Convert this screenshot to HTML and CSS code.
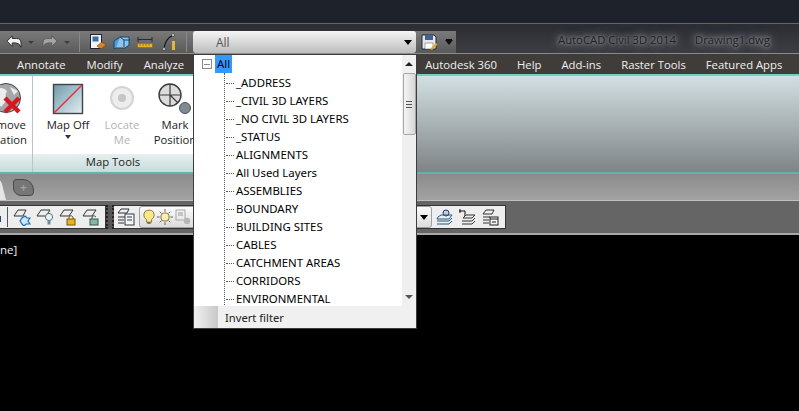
FILE: index.html
```html
<!DOCTYPE html>
<html lang="en">
<head>
    <meta charset="UTF-8">
    <meta name="viewport" content="width=device-width, initial-scale=1.0">
    <title>AutoCAD Civil 3D 2014</title>
    <link rel="stylesheet" href="styles.css">
</head>
<body>
    <div id="app">
        <div class="top-strip"></div>

        <div class="header">
            <div class="qat">
                <svg class="qat-icon undo" width="16" height="14" viewBox="0 0 18 16"><path d="M1 7 L7 1 V4 H12 Q17 4 17 9 V14 Q15 9 11 9 H7 V13 Z" fill="#f2f2f2" stroke="#222"/></svg>
                <span class="mini-arrow"></span>
                <svg class="qat-icon redo" width="16" height="14" viewBox="0 0 18 16"><path d="M17 7 L11 1 V4 H6 Q1 4 1 9 V14 Q3 9 7 9 H11 V13 Z" fill="#a4a4a4" stroke="#5a5a5a"/></svg>
                <span class="mini-arrow"></span>
                <span class="qat-sep"></span>
                <svg class="qat-icon doc" width="18" height="18" viewBox="0 0 18 18"><rect x="1.5" y="1.5" width="11" height="14" fill="#f4f4f4" stroke="#223"/><rect x="3.5" y="3.5" width="6" height="5" fill="#3a6ea5"/><path d="M8 13 L13 9 L17 12 L12 16 Z" fill="#d9822b" stroke="#6b3c0a" stroke-width=".6"/></svg>
                <svg class="qat-icon cube" width="18" height="16" viewBox="0 0 18 16"><path d="M1 7 L7 3 V12 L1 15 Z" fill="#4f9bd8" stroke="#17466f"/><path d="M7 3 H16 V11 L12 14 H3" fill="#8fc5ec" stroke="#17466f"/><path d="M7 3 L11 6 H17 M11 6 V13" fill="none" stroke="#17466f"/></svg>
                <svg class="qat-icon ruler" width="16" height="12" viewBox="0 0 16 12"><path d="M1 3.5 H15 M1 1 V6 M15 1 V6" fill="none" stroke="#2a2a2a"/><rect x="0.5" y="7.5" width="15" height="4" fill="#e5b33a" stroke="#8a6510" stroke-width=".6"/><path d="M3 8 V10 M6 8 V10 M9 8 V10 M12 8 V10" stroke="#7a5a10" stroke-width=".7"/></svg>
                <svg class="qat-icon arc" width="16" height="18" viewBox="0 0 16 18"><path d="M2 16 Q3 6 11 2" fill="none" stroke="#111" stroke-width="1.2"/><circle cx="2" cy="16" r="1.4" fill="#fff" stroke="#111" stroke-width=".6"/><circle cx="11" cy="2" r="1.4" fill="#fff" stroke="#111" stroke-width=".6"/><rect x="10" y="8" width="3" height="9" fill="#e5b33a"/></svg>
                <span class="qat-sep right"></span>
                <div class="combo">
                    <span>All</span>
                    <span class="arrow"></span>
                </div>
                <svg class="qat-icon save" width="17" height="17" viewBox="0 0 17 17"><path d="M1 1 H13 L15 3 V15 H1 Z" fill="#e8e8e8" stroke="#1c2a44"/><rect x="4" y="1" width="8" height="5" fill="#44628e"/><rect x="4" y="9" width="8" height="6" fill="#fff" stroke="#555" stroke-width=".5"/><path d="M9 15 L15 9 L16.5 10.5 L11 16 Z" fill="#e7a52f"/></svg>
                <span class="more"></span>
            </div>
            <span class="app-title">AutoCAD Civil 3D 2014</span>
            <span class="app-title file">Drawing1.dwg</span>
        </div>

        <div class="tabs">
            <span class="tab first">Annotate</span>
            <span class="tab second">Modify</span>
            <span class="tab">Analyze</span>
            <span class="tab hub">Autodesk 360</span>
            <span class="tab">Help</span>
            <span class="tab">Add-ins</span>
            <span class="tab">Raster Tools</span>
            <span class="tab">Featured Apps</span>
        </div>

        <div class="ribbon">
            <div class="panel remove">
                <div class="panel-body">
                    <div class="tool">
                        <svg width="36" height="32" viewBox="0 0 36 32"><circle cx="13" cy="15" r="14.5" fill="#a4a8aa" stroke="#444"/><path d="M4 6 Q10 3 14 8 Q11 13 14 17 L8 24 Q2 16 4 6 Z M17 4 L25 8 L21 12 Z" fill="#ececec"/><path d="M12 15 L26 29 M26 15 L12 29" stroke="#d8161b" stroke-width="4.5"/></svg>
                        <span>Remove<br>Location</span>
                    </div>
                </div>
                <div class="panel-label"></div>
            </div>
            <div class="panel map-tools">
                <div class="panel-body">
                    <div class="tool map-off">
                        <svg width="32" height="32" viewBox="0 0 32 32"><defs><linearGradient id="mapfill" x1="0" y1="0" x2="1" y2="1"><stop offset="0" stop-color="#6f99ab"/><stop offset="1" stop-color="#e4eef2"/></linearGradient></defs><rect x="1.5" y="1.5" width="29" height="29" fill="url(#mapfill)" stroke="#3e4448" stroke-width="1.4"/><path d="M2 30 L30 2" stroke="#d9343c" stroke-width="1.4"/></svg>
                        <span>Map Off</span>
                        <i class="drop"></i>
                    </div>
                    <div class="tool locate">
                        <svg width="32" height="32" viewBox="0 0 32 32"><circle cx="16" cy="15" r="11" fill="#ededed" stroke="#d4d4d4" stroke-width="2"/><circle cx="16" cy="15" r="4" fill="#c6c6c6"/></svg>
                        <span>Locate<br>Me</span>
                    </div>
                    <div class="tool mark">
                        <svg width="36" height="32" viewBox="0 0 36 32"><circle cx="13" cy="12" r="11" fill="#dcdcdc" stroke="#3a3a3a" stroke-width="1.4"/><path d="M13 1 V23 M2 12 H24 M13 12 L21 20" stroke="#3a3a3a" stroke-width="1.2"/><circle cx="28" cy="25" r="5.5" fill="#7f8b90" stroke="#49555a"/></svg>
                        <span>Mark<br>Position</span>
                    </div>
                </div>
                <div class="panel-label">Map Tools</div>
            </div>
            <div class="panel-rest"></div>
        </div>

        <div class="doc-tabs">
            <span class="doc-tab"></span>
            <span class="new-tab"><b>+</b></span>
        </div>

        <div class="toolbar">
            <div class="strip left-strip">
                <span class="tb-edge"></span>
                <span class="tb-sep"></span>
                <svg class="layer" width="18" height="18" viewBox="0 0 18 18"><path d="M1 8 L5 2 H13 L10 8 Z" fill="none" stroke="#333"/><path d="M12 8 L14 10 L17 10 L15 13 L17 16 L13 16 L11 18 L9 16 L7 13 L9 10 Z" fill="#cfe6f7" stroke="#1b6fb5" stroke-width="1.2"/></svg>
                <svg class="layer" width="18" height="18" viewBox="0 0 18 18"><path d="M1 8 L5 2 H14 L10 8 Z" fill="none" stroke="#333"/><circle cx="13" cy="9" r="3.6" fill="#e9f1f6" stroke="#577"/><rect x="11.5" y="12.5" width="3" height="4" fill="#6f8c9a"/></svg>
                <svg class="layer" width="18" height="18" viewBox="0 0 18 18"><path d="M1 8 L5 2 H14 L10 8 Z" fill="none" stroke="#333"/><rect x="8" y="11" width="8" height="6" fill="#e6b422" stroke="#7a5a0a"/><path d="M10 11 V9 Q12 6 14 9 V11" fill="none" stroke="#7a5a0a"/></svg>
                <svg class="layer" width="18" height="18" viewBox="0 0 18 18"><path d="M1 8 L5 2 H14 L10 8 Z" fill="none" stroke="#333"/><rect x="8" y="11" width="8" height="6" fill="#8cb4a8" stroke="#2f5a50"/><path d="M10 11 V9 Q12 6 14 9" fill="none" stroke="#2f5a50"/></svg>
            </div>
            <span class="gripper"></span>
            <div class="strip main-strip">
                <svg class="stack first" width="18" height="18" viewBox="0 0 18 18"><path d="M1 5 L4 1 H12 L10 5 Z M1 9 H8 M1 12 H7 M1 15 H7" fill="none" stroke="#333"/><rect x="8" y="6" width="9" height="11" fill="#f4f6f8" stroke="#2d3b4a"/><path d="M10 9 H15 M10 12 H15" stroke="#2d3b4a"/></svg>
                <div class="layer-combo">
                    <svg width="12" height="16" viewBox="0 0 14 18"><path d="M7 1 Q13 1 13 7 Q13 10 10 12 V15 H4 V12 Q1 10 1 7 Q1 1 7 1 Z" fill="#fbe88a" stroke="#7b6a2a"/><rect x="5" y="15" width="4" height="2" fill="#666"/></svg>
                    <svg width="16" height="16" viewBox="0 0 18 18"><circle cx="9" cy="9" r="4.6" fill="#fbeeb5" stroke="#7b6a2a"/><path d="M9 0 V3 M9 15 V18 M0 9 H3 M15 9 H18 M3 3 L5 5 M13 13 L15 15 M15 3 L13 5 M3 15 L5 13" stroke="#555"/></svg>
                    <svg width="16" height="16" viewBox="0 0 16 16"><rect x="1" y="1" width="9" height="10" fill="none" stroke="#a8a8a8"/><rect x="3" y="3" width="5" height="4" fill="#c4c4c4"/><circle cx="12" cy="12" r="3.2" fill="#b6b6b6"/></svg>
                    <span class="arrow"></span>
                </div>
                <svg class="stack" width="17" height="17" viewBox="0 0 17 17"><circle cx="10" cy="4" r="3" fill="#b8d4e4" stroke="#336"/><path d="M2 8 L5 6 H16 L13 10 H1 Z M1 12 H13 L16 9 M1 15 H13 L16 12" fill="none" stroke="#1f5d85"/></svg>
                <svg class="stack" width="17" height="17" viewBox="0 0 17 17"><path d="M0 2 H6 M1 0 V4 M6 2 V7" stroke="#111"/><path d="M4 9 L7 6 H16 L13 9 Z M3 12 H13 L16 9 M3 15 H13 L16 12" fill="none" stroke="#333"/></svg>
                <svg class="stack" width="17" height="17" viewBox="0 0 17 17"><path d="M1 5 L4 1 H12 L10 5 Z M1 8 H8 M1 11 H7 M1 14 H7" fill="none" stroke="#333"/><rect x="8" y="8" width="8" height="8" fill="#f4f4f4" stroke="#222"/><path d="M8 10 H16 M10 13 H14" stroke="#222"/></svg>
            </div>
        </div>

        <div class="canvas">ne]</div>

        <div class="dropdown">
            <div class="list">
                <div class="tree">
                    <div class="root">
                        <span class="collapse"></span>
                        <span class="selected">All</span>
                    </div>
                    <div class="children">
                        <div>_ADDRESS</div>
                        <div>_CIVIL 3D LAYERS</div>
                        <div>_NO CIVIL 3D LAYERS</div>
                        <div>_STATUS</div>
                        <div>ALIGNMENTS</div>
                        <div>All Used Layers</div>
                        <div>ASSEMBLIES</div>
                        <div>BOUNDARY</div>
                        <div>BUILDING SITES</div>
                        <div>CABLES</div>
                        <div>CATCHMENT AREAS</div>
                        <div>CORRIDORS</div>
                        <div>ENVIRONMENTAL</div>
                    </div>
                </div>
                <div class="scrollbar">
                    <span class="scroll-btn up"></span>
                    <span class="thumb"><i></i></span>
                    <span class="scroll-btn down"></span>
                </div>
            </div>
            <div class="invert">
                <span class="invert-icon"></span>
                <span>Invert filter</span>
            </div>
        </div>
    </div>
</body>
</html>
```
FILE: styles.css
```css
body {
    margin: 0;
    background-color: #000;
    font-family: "Open Sans", sans-serif;
}

#app {
    position: relative;
    width: 799px;
    height: 411px;
    overflow: hidden;
    background-color: #000;
}

.top-strip {
    height: 23px;
    background-color: #1e222a;
    border-bottom: 1px solid #62646a;
}

/* title row with the quick access toolbar */
.header {
    display: flex;
    align-items: flex-end;
    height: 29px;
    background: linear-gradient(#2b2d33, #3c3e43);
    border-bottom: 1px solid #8c8c8c;
}

.qat {
    display: flex;
    align-items: center;
    box-sizing: border-box;
    width: 456px;
    height: 22px;
    padding-left: 6px;
    background: linear-gradient(#7a7a7a, #5a5a5a);
    flex-shrink: 0;
}

.qat-icon {
    flex-shrink: 0;
}

.undo {
    margin-right: 6px;
}

.redo {
    margin: 0 6px 0 8px;
}

.doc, .cube {
    margin-right: 6px;
}

.ruler {
    margin-right: 9px;
}

.arc {
    margin-right: 8px;
}

.mini-arrow {
    width: 0;
    height: 0;
    border: 3px solid transparent;
    border-top: 3px solid #3c3c3c;
    margin-top: 3px;
}

.qat-sep {
    width: 1px;
    height: 20px;
    margin: 0 9px;
    background-color: #888;
}

.qat-sep.right {
    margin: 0 6px 0 0;
}

.combo {
    display: flex;
    align-items: center;
    justify-content: space-between;
    box-sizing: border-box;
    width: 223px;
    height: 22px;
    padding: 0 4px 0 23px;
    border-radius: 3px;
    background: linear-gradient(#f5f5f5, #bdbdbd);
    color: #555;
    font-size: 12px;
    margin-right: 5px;
}

.combo .arrow, .layer-combo .arrow {
    width: 0;
    height: 0;
    border: 4px solid transparent;
    border-top: 5px solid #000;
    margin-top: 5px;
}

.save {
    margin-right: 7px;
}

.more {
    width: 0;
    height: 0;
    border: 4px solid transparent;
    border-top: 5px solid #111;
    border-bottom: 0;
    box-shadow: 0 -2px 0 -1px #111;
}

.app-title {
    align-self: center;
    margin-left: 102px;
    padding-top: 1px;
    color: #1c1d20;
    font-size: 11.3px;
    text-shadow: 0 0 3px #8a8c90, 0 0 6px #8a8c90, 0 0 9px #85878b, 0 0 12px #7a7c80;
    white-space: nowrap;
}

.app-title.file {
    margin-left: 19px;
}

/* ribbon tab names */
.tabs {
    display: flex;
    align-items: center;
    height: 20px;
    background-color: #3f3c3a;
    color: #f0f0f0;
    font-size: 11.3px;
}

.tab {
    margin-right: 20px;
    white-space: nowrap;
}

.tab.first {
    margin-left: 17px;
    margin-right: 21px;
}

.tab.second {
    margin-right: 21px;
}

.tab.hub {
    margin-left: 221px;
}

.ribbon {
    display: flex;
    height: 96px;
    border-top: 2px solid #6fd0c6;
}

.panel {
    display: flex;
    flex-direction: column;
    background-color: #fff;
    border-right: 1px solid #b9c4c4;
}

.panel.remove {
    width: 32px;
    flex-shrink: 0;
}

.panel.map-tools {
    width: 160px;
    flex-shrink: 0;
}

.panel-body {
    display: flex;
    flex: 1;
    overflow: hidden;
}

.remove .panel-body {
    justify-content: flex-end;
}

.panel-label {
    height: 18px;
    background: linear-gradient(#e6f0ef, #c6dcda);
    color: #222;
    font-size: 11.3px;
    line-height: 16px;
    text-align: center;
}

.tool {
    display: flex;
    flex-direction: column;
    align-items: center;
    flex-shrink: 0;
    padding-top: 7px;
    color: #222;
    font-size: 11.3px;
    line-height: 15px;
    text-align: center;
}

.tool span {
    margin-top: 2px;
}

.remove .tool {
    margin-right: 5px;
}

.remove svg {
    align-self: flex-start;
    margin-left: 11px;
    margin-right: -11px;
}

.map-off {
    width: 60px;
    margin-left: 5px;
}

.locate {
    width: 42px;
    margin-left: 3px;
    color: #b4b4b4;
}

.mark {
    width: 50px;
    margin-left: 7px;
}

.drop {
    width: 0;
    height: 0;
    margin-top: 3px;
    border: 3px solid transparent;
    border-top: 4px solid #333;
}

.panel-rest {
    flex: 1;
    background: linear-gradient(#d2dfe2, #7f8486);
}

/* document tabs */
.doc-tabs {
    display: flex;
    align-items: flex-end;
    height: 26px;
    border-top: 2px solid #5fb5a8;
    background: linear-gradient(#8c8c8c, #a2a2a2);
    border-bottom: 1px solid #c0c0c0;
}

.doc-tab {
    width: 6px;
    height: 22px;
    background-color: #e6e6e6;
    border-top-right-radius: 8px;
    transform: skewX(14deg);
    transform-origin: bottom left;
}

.new-tab {
    display: flex;
    align-items: center;
    justify-content: center;
    box-sizing: border-box;
    width: 21px;
    height: 17px;
    margin: 0 0 4px 7px;
    border: 1px solid #4a4a4a;
    border-radius: 3px 11px 4px 8px;
    background-color: #767676;
    color: #a0a0a0;
    font-size: 12px;
}

/* layer toolbars */
.toolbar {
    display: flex;
    align-items: center;
    height: 32px;
    background-color: #656565;
    border-bottom: 2px solid #a8a8a8;
}

.strip {
    display: flex;
    align-items: center;
    box-sizing: border-box;
    height: 24px;
    background-color: #eeeeee;
    border: 1px solid #333;
    border-left: 0;
}

.left-strip {
    width: 106px;
}

.tb-edge {
    width: 3px;
    height: 6px;
    margin-top: 4px;
    background-color: #2a4a72;
}

.tb-sep {
    width: 1px;
    height: 20px;
    margin: 0 6px;
    background-color: #4a5a6a;
}

.layer {
    margin-right: 5px;
    flex-shrink: 0;
}

.gripper {
    box-sizing: border-box;
    width: 8px;
    height: 24px;
    border-left: 2px dotted #222;
    border-right: 2px dotted #222;
    background-color: #555;
}

.main-strip {
    width: 392px;
    padding-left: 3px;
}

.layer-combo {
    display: flex;
    align-items: center;
    box-sizing: border-box;
    width: 298px;
    height: 22px;
    margin-right: 4px;
    padding: 0 3px;
    gap: 2px;
    border: 1px solid #a0a0a0;
    border-radius: 3px;
    background: linear-gradient(#fbfbfb, #dcdcdc);
}

.layer-combo .arrow {
    margin-left: auto;
}

.main-strip .stack {
    flex-shrink: 0;
    margin-right: 6px;
}

.main-strip .stack.first {
    margin-right: 4px;
}

.canvas {
    padding-top: 7px;
    color: #f4f4f4;
    font-size: 11.5px;
    line-height: 16px;
}

/* layer filter drop-down, opens over the ribbon */
.dropdown {
    position: absolute;
    left: 193px;
    top: 55px;
    box-sizing: border-box;
    width: 224px;
    height: 274px;
    background-color: #fff;
    border: 1px solid #3c3c3c;
    border-top: 0;
    font-family: "Noto Sans", sans-serif;
}

.list {
    display: flex;
    height: 251px;
}

.tree {
    flex: 1;
    overflow: hidden;
    color: #000;
    font-size: 11.4px;
}

.root {
    display: flex;
    align-items: center;
    height: 18px;
    padding-left: 8px;
}

.collapse {
    box-sizing: border-box;
    width: 10px;
    height: 10px;
    border: 1px solid #8a8a8a;
    margin-right: 3px;
    background: linear-gradient(90deg, #8a8a8a, #8a8a8a) center / 6px 1px no-repeat;
}

.selected {
    padding: 0 2px;
    line-height: 18px;
    background-color: #3399ff;
}

.children {
    margin-left: 30px;
    border-left: 1px dotted #555;
}

.children div {
    position: relative;
    height: 18px;
    padding-left: 11px;
    line-height: 19px;
    white-space: nowrap;
}

.children div::before {
    content: "";
    position: absolute;
    left: 1px;
    top: 10px;
    width: 8px;
    border-top: 1px dotted #555;
}

.scrollbar {
    display: flex;
    flex-direction: column;
    align-items: center;
    width: 14px;
    background-color: #efefef;
}

.scroll-btn {
    display: flex;
    align-items: center;
    justify-content: center;
    width: 14px;
    height: 18px;
    background-color: #f0f0f0;
}

.scroll-btn::before {
    content: "";
    border: 4px solid transparent;
}

.scroll-btn.up::before {
    border-bottom: 4px solid #222;
    border-top: 0;
}

.scroll-btn.down {
    margin-top: auto;
}

.scroll-btn.down::before {
    border-top: 4px solid #555;
    border-bottom: 0;
}

.thumb {
    display: flex;
    align-items: center;
    justify-content: center;
    box-sizing: border-box;
    width: 13px;
    height: 62px;
    border: 1px solid #a5a5a5;
    border-radius: 2px;
    background: linear-gradient(90deg, #f4f4f4, #d8d8d8);
}

.thumb i {
    width: 6px;
    height: 7px;
    background: repeating-linear-gradient(#555 0 1px, transparent 1px 3px);
}

.invert {
    display: flex;
    align-items: center;
    height: 22px;
    background-color: #f0f0f0;
    color: #222;
    font-size: 11.2px;
}

.invert-icon {
    align-self: stretch;
    width: 24px;
    margin-right: 7px;
    background: linear-gradient(90deg, #f0f0f0, #c8c8c8);
}
```
